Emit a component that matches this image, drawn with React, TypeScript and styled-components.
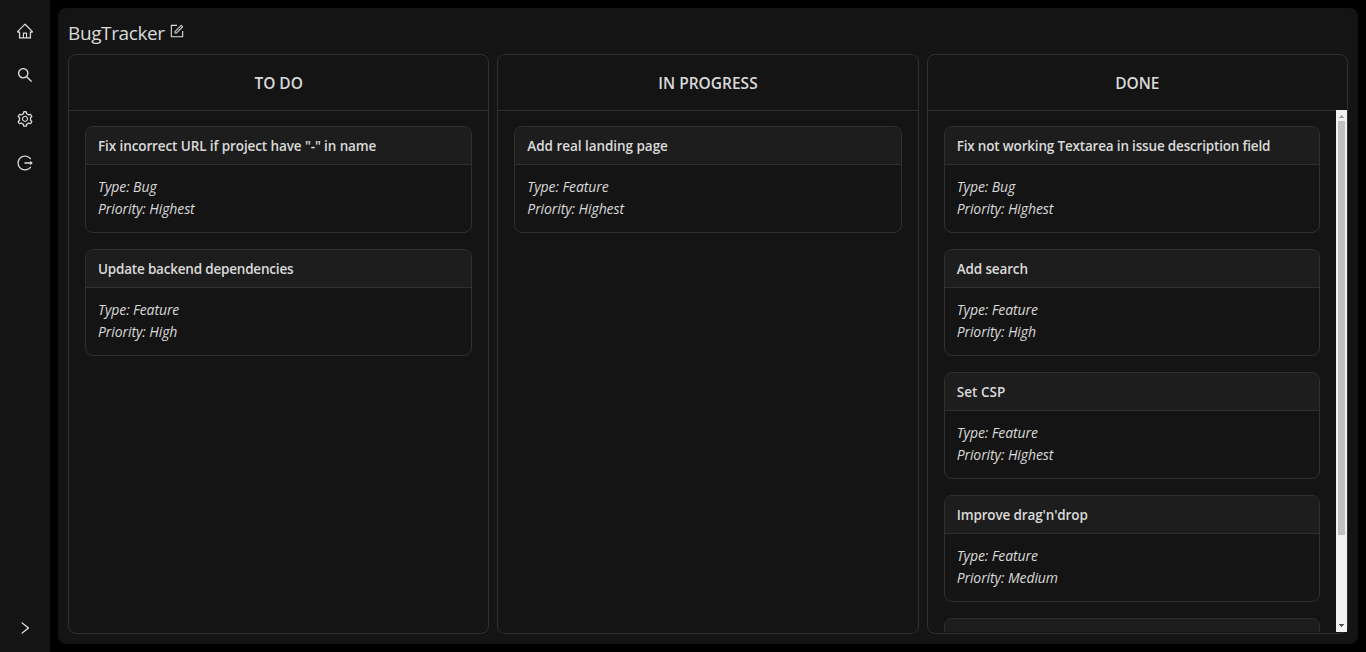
import React from 'react';
import styled, { createGlobalStyle } from 'styled-components';
import {
  AiOutlineForm,
  AiOutlineHome,
  AiOutlineLogout,
  AiOutlineRight,
  AiOutlineSearch,
  AiOutlineSetting,
} from 'react-icons/ai';

const GlobalStyle = createGlobalStyle`
  *, *::before, *::after { box-sizing: border-box; }
  body {
    margin: 0;
    background: #000;
    color: rgba(255, 255, 255, 0.85);
    font-family: "Segoe UI", "Open Sans", "Noto Sans", sans-serif;
    font-size: 14px;
    line-height: 22px;
    overflow: hidden;
  }
`;

const Layout = styled.div`
  display: flex;
  height: 652px;
`;

const Sidebar = styled.nav`
  display: flex;
  flex-direction: column;
  align-items: center;
  justify-content: space-between;
  width: 50px;
  padding: 22px 0 16px;
  background: #141414;
`;

const Menu = styled.div`
  display: flex;
  flex-direction: column;
  gap: 26px;
`;

const IconButton = styled.button<{ $size?: number }>`
  display: flex;
  padding: 0;
  border: 0;
  background: none;
  color: rgba(255, 255, 255, 0.85);
  font-size: ${(p) => p.$size ?? 16}px;
`;

const Panel = styled.main`
  display: flex;
  flex: 1;
  flex-direction: column;
  margin: 8px;
  padding: 10px;
  border-radius: 8px;
  background: #141414;
`;

const TitleRow = styled.header`
  display: flex;
  align-items: flex-start;
  gap: 4px;
  height: 36px;
  padding-top: 1px;

  ${IconButton} {
    margin-top: 4px;
  }
`;

const Title = styled.h1`
  margin: 0;
  font-size: 19px;
  font-weight: 400;
  line-height: 28px;
  white-space: nowrap;
  letter-spacing: -0.38px;
`;

const Board = styled.div`
  display: grid;
  grid-template-columns: repeat(3, 1fr);
  gap: 8px;
  height: 580px;
`;

const Column = styled.section`
  display: flex;
  flex-direction: column;
  min-width: 0;
  min-height: 0;
  border: 1px solid #303030;
  border-radius: 8px;
`;

const ColumnHead = styled.h2`
  display: flex;
  flex: none;
  align-items: center;
  justify-content: center;
  height: 56px;
  margin: 0 0 -1px;
  padding-top: 1px;
  border-bottom: 1px solid #303030;
  font-size: 15.5px;
  font-weight: 600;
`;

const ColumnBody = styled.div`
  display: flex;
  flex: 1;
  min-height: 0;
  margin-bottom: 1px;
`;

const CardList = styled.div`
  display: flex;
  flex: 1;
  flex-direction: column;
  gap: 16px;
  min-width: 0;
  padding: 16px;
  overflow: hidden;
`;

const Card = styled.article`
  flex: none;
  height: 107px;
  border: 1px solid #303030;
  border-radius: 8px;
  overflow: hidden;
`;

const CardHead = styled.h3<{ $spacing: number }>`
  height: 38px;
  margin: 0 0 -1px;
  padding: 8px 12px 0;
  border-bottom: 1px solid #303030;
  background: #1d1d1d;
  font-size: 13.5px;
  font-weight: 600;
  line-height: 22px;
  white-space: nowrap;
  letter-spacing: ${(p) => p.$spacing}px;
`;

const CardBody = styled.div`
  padding: 12px;
  font-style: italic;
`;

const Field = styled.div`
  white-space: nowrap;
  letter-spacing: -0.09px;
`;

const Scrollbar = styled.div`
  display: flex;
  flex: none;
  flex-direction: column;
  justify-content: space-between;
  width: 11px;
  background: #f1f1f1;
`;

const Thumb = styled.div`
  width: 7px;
  height: 414px;
  margin: 0 auto auto;
  background: #c1c1c1;
`;

const Arrow = styled.svg`
  display: block;
  width: 11px;
  height: 11px;
`;

interface Issue {
  title: string;
  type: string;
  priority: string;
  spacing?: number;
}

interface Stage {
  name: string;
  scroll?: boolean;
  issues: Issue[];
}

const stages: Stage[] = [
  {
    name: 'TO DO',
    issues: [
      { title: 'Fix incorrect URL if project have "-" in name', type: 'Bug', priority: 'Highest', spacing: -0.1 },
      { title: 'Update backend dependencies', type: 'Feature', priority: 'High', spacing: -0.2 },
    ],
  },
  {
    name: 'IN PROGRESS',
    issues: [{ title: 'Add real landing page', type: 'Feature', priority: 'Highest', spacing: -0.04 }],
  },
  {
    name: 'DONE',
    scroll: true,
    issues: [
      { title: 'Fix not working Textarea in issue description field', type: 'Bug', priority: 'Highest', spacing: -0.18 },
      { title: 'Add search', type: 'Feature', priority: 'High', spacing: -0.13 },
      { title: 'Set CSP', type: 'Feature', priority: 'Highest', spacing: 0.05 },
      { title: "Improve drag'n'drop", type: 'Feature', priority: 'Medium', spacing: -0.13 },
      { title: '', type: '', priority: '' },
    ],
  },
];

function IssueCard({ issue }: { issue: Issue }) {
  return (
    <Card>
      <CardHead $spacing={issue.spacing ?? 0}>{issue.title}</CardHead>
      {issue.type && (
        <CardBody>
          <Field>Type: {issue.type}</Field>
          <Field>Priority: {issue.priority}</Field>
        </CardBody>
      )}
    </Card>
  );
}

export default function App() {
  return (
    <>
      <GlobalStyle />
      <Layout>
        <Sidebar>
          <Menu>
            <IconButton $size={18}><AiOutlineHome /></IconButton>
            <IconButton $size={18}><AiOutlineSearch /></IconButton>
            <IconButton $size={18}><AiOutlineSetting /></IconButton>
            <IconButton $size={18}><AiOutlineLogout /></IconButton>
          </Menu>
          <IconButton><AiOutlineRight /></IconButton>
        </Sidebar>
        <Panel>
          <TitleRow>
            <Title>BugTracker</Title>
            <IconButton><AiOutlineForm /></IconButton>
          </TitleRow>
          <Board>
            {stages.map((stage) => (
              <Column key={stage.name}>
                <ColumnHead>{stage.name}</ColumnHead>
                <ColumnBody>
                  <CardList>
                    {stage.issues.map((issue) => (
                      <IssueCard key={issue.title} issue={issue} />
                    ))}
                  </CardList>
                  {stage.scroll && (
                    <Scrollbar>
                      <Arrow viewBox="0 0 11 11"><path d="M3 8h5v-1h-1v-1h-1v-1h-1v1h-1v1h-1z" fill="#a3a3a3" /></Arrow>
                      <Thumb />
                      <Arrow viewBox="0 0 11 11"><path d="M3 3h5v1h-1v1h-1v1h-1v-1h-1v-1h-1z" fill="#505050" /></Arrow>
                    </Scrollbar>
                  )}
                </ColumnBody>
              </Column>
            ))}
          </Board>
        </Panel>
      </Layout>
    </>
  );
}
